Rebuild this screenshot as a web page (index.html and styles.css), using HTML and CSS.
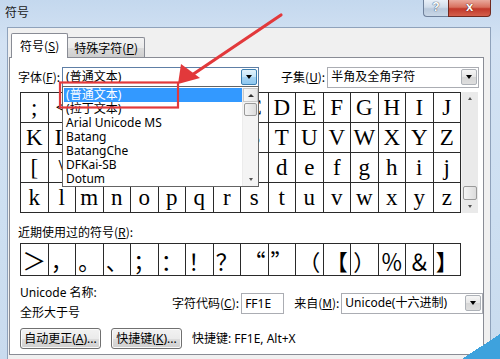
FILE: index.html
```html
<!DOCTYPE html>
<html>
<head>
<meta charset="utf-8">
<title>符号</title>
<link rel="stylesheet" href="styles.css">
</head>
<body>
<div class="window">
  <div class="titlebar">
    <span class="title">符号</span>
    <div class="caption-btns">
      <span class="btn-help">?</span>
      <span class="btn-close">x</span>
    </div>
  </div>
  <div class="client">
    <div class="tabs">
      <div class="tab active">符号(<u>S</u>)</div>
      <div class="tab">特殊字符(<u>P</u>)</div>
    </div>
    <div class="panel">
      <div class="font-row">
        <span class="lbl font-lbl">字体(<u>F</u>):</span>
        <div class="combo font-combo">
          <span class="combo-text">(普通文本)</span>
          <span class="drop drop-active"><i class="tri"></i></span>
          <div class="droplist">
            <div class="items">
              <div class="item selected">(普通文本)</div>
              <div class="item">(拉丁文本)</div>
              <div class="item">Arial Unicode MS</div>
              <div class="item">Batang</div>
              <div class="item">BatangChe</div>
              <div class="item">DFKai-SB</div>
              <div class="item">Dotum</div>
            </div>
            <div class="list-scroll">
              <span class="sb-btn"><i class="tri-up"></i></span>
              <span class="sb-thumb small"></span>
              <span class="sb-fill"></span>
              <span class="sb-arrow-dn"><i class="tri-dn-s"></i></span>
            </div>
          </div>
        </div>
        <span class="lbl subset-lbl">子集(<u>U</u>):</span>
        <div class="combo subset-combo">
          <span class="combo-text">半角及全角字符</span>
          <span class="drop"><i class="tri"></i></span>
        </div>
      </div>

      <div class="grid-wrap">
        <div class="chargrid">
          <span>;</span><span>&lt;</span><span>=</span><span>&gt;</span><span>?</span><span>@</span><span>A</span><span>B</span><span>C</span><span>D</span><span>E</span><span>F</span><span>G</span><span>H</span><span>I</span><span>J</span>
          <span>K</span><span>L</span><span>M</span><span>N</span><span>O</span><span>P</span><span>Q</span><span>R</span><span>S</span><span>T</span><span>U</span><span>V</span><span>W</span><span>X</span><span>Y</span><span>Z</span>
          <span>[</span><span>\</span><span>]</span><span>^</span><span>_</span><span>`</span><span>a</span><span>b</span><span>c</span><span>d</span><span>e</span><span>f</span><span>g</span><span>h</span><span>i</span><span>j</span>
          <span>k</span><span>l</span><span>m</span><span>n</span><span>o</span><span>p</span><span>q</span><span>r</span><span>s</span><span>t</span><span>u</span><span>v</span><span>w</span><span>x</span><span>y</span><span>z</span>
        </div>
        <div class="vscroll">
          <span class="sb-arrow-up"><i class="tri-up-s"></i></span>
          <span class="sb-track"></span>
          <span class="sb-thumb big"></span>
          <span class="sb-arrow-dn"><i class="tri-dn-s"></i></span>
        </div>
      </div>

      <div class="recent-lbl">近期使用过的符号(<u>R</u>):</div>
      <div class="recent">
        <span class="big">＞</span><span>，</span><span>。</span><span>、</span><span>；</span><span>：</span><span>！</span><span>？</span><span class="qr">“</span><span class="ql">”</span><span>（</span><span>【</span><span>）</span><span>％</span><span>＆</span><span>】</span>
      </div>

      <div class="info-row">
        <div class="info-left">
          <div>Unicode 名称:</div>
          <div>全形大于号</div>
        </div>
        <span class="lbl code-lbl">字符代码(<u>C</u>):</span>
        <div class="textbox">FF1E</div>
        <span class="lbl from-lbl">来自(<u>M</u>):</span>
        <div class="combo from-combo">
          <span class="combo-text">Unicode(十六进制)</span>
          <span class="drop"><i class="tri"></i></span>
        </div>
      </div>

      <div class="btn-row">
        <span class="button b1">自动更正(<u>A</u>)...</span>
        <span class="button b2">快捷键(<u>K</u>)...</span>
        <span class="shortcut">快捷键: FF1E, Alt+X</span>
      </div>
    </div>
  </div>

  <svg class="overlay" width="500" height="359" viewBox="0 0 500 359">
    <rect x="60" y="82.5" width="118" height="25" fill="none" stroke="#e2393b" stroke-width="2.2"/>
    <line x1="281" y1="15" x2="189" y2="77" stroke="#e2393b" stroke-width="3.2" stroke-linecap="round"/>
    <polygon points="178,84 181,64 200,78" fill="#e2393b"/>
  </svg>
  <div class="corner"></div>
</div>
</body>
</html>
```

FILE: styles.css
```css
* { box-sizing: border-box; margin: 0; padding: 0; }

body {
  width: 500px;
  height: 359px;
  overflow: hidden;
  font-family: "Noto Sans", "Noto Sans CJK SC", sans-serif;
  font-size: 12px;
  color: #000;
  background: #fff;
}

u { text-decoration: underline; text-underline-offset: 1px; }

.window {
  position: relative;
  width: 500px;
  height: 359px;
  background: linear-gradient(180deg, #c4d8ee 0%, #d3e2f3 12%, #cddff1 60%, #c9dbee 100%);
  padding: 0 9px 0 7px;
  display: flex;
  flex-direction: column;
}

.titlebar {
  height: 27px;
  display: flex;
  align-items: flex-start;
  flex-shrink: 0;
}

.title {
  margin-top: 3px;
  margin-left: -2px;
  font-size: 12px;
  line-height: 18px;
  font-family: "Noto Sans CJK SC", sans-serif;
  color: #1a1a1a;
}

.caption-btns {
  margin-left: auto;
  display: flex;
  height: 17px;
}

.btn-help {
  width: 25px;
  height: 17px;
  border: 1px solid #6f819b;
  border-top: none;
  border-right: none;
  border-radius: 0 0 0 4px;
  background: linear-gradient(180deg, #e9f0f8 0%, #d0dcea 45%, #b9c9dc 55%, #c9d7e7 100%);
  color: #fff;
  font-weight: bold;
  font-size: 12px;
  line-height: 15px;
  text-align: center;
  text-shadow: 0 0 1px #3a4a66, 0 0 1px #3a4a66;
  font-family: "Liberation Sans", sans-serif;
}

.btn-close {
  width: 43px;
  height: 17px;
  border: 1px solid #70291f;
  border-top: none;
  border-radius: 0 0 4px 0;
  background: linear-gradient(180deg, #e9a99d 0%, #d8705e 45%, #c1382a 55%, #d4604c 100%);
  color: #fff;
  font-weight: bold;
  font-size: 13px;
  line-height: 14px;
  text-align: center;
  text-shadow: 0 0 1px #5a1a12, 0 0 1px #5a1a12;
  font-family: "Liberation Sans", sans-serif;
}

.client {
  flex: 1;
  background: #f0f0f0;
  border: 1px solid #8fa2bb;
  border-bottom: none;
  padding: 5px 6px 0 1px;
  display: flex;
  flex-direction: column;
}

.tabs {
  display: flex;
  align-items: flex-end;
  margin-left: 2px;
  height: 24px;
  position: relative;
  z-index: 2;
}

.tab {
  height: 20px;
  padding: 0 6px;
  border: 1px solid #898c95;
  border-bottom: none;
  border-radius: 2px 2px 0 0;
  background: linear-gradient(180deg, #f3f3f3 0%, #ebebeb 50%, #dcdcdc 51%, #cfcfcf 100%);
  font-family: "Noto Sans CJK SC", sans-serif;
  line-height: 19px;
  color: #000;
  white-space: nowrap;
  margin-left: -1px;
}

.tab:first-child { margin-left: 0; }

.tab.active {
  height: 25px;
  margin-bottom: -1px;
  background: #fff;
  padding: 0 8px;
  line-height: 23px;
  position: relative;
  z-index: 3;
}

.panel {
  background: #fff;
  border: 1px solid #898c95;
  height: 298px;
  padding: 9px 0 0 8px;
  position: relative;
  z-index: 1;
}

.lbl {
  font-family: "Noto Sans CJK SC", sans-serif;
  line-height: 16px;
  white-space: nowrap;
  flex-shrink: 0;
}

.font-row {
  display: flex;
  align-items: center;
  height: 20px;
  position: relative;
  z-index: 5;
}

.font-lbl { margin-right: 2px; }
.subset-lbl { margin-left: 22px; margin-right: 2px; }

.combo {
  position: relative;
  height: 20px;
  border: 1px solid #abadb3;
  background: #fff;
  display: flex;
  align-items: center;
  flex-shrink: 0;
}

.combo-text {
  flex: 1;
  padding-left: 3px;
  line-height: 16px;
  white-space: nowrap;
  overflow: hidden;
}

.font-combo { width: 197px; border-color: #5e7fa6; }
.subset-combo { width: 152px; height: 21px; }

.drop {
  width: 16px;
  height: 16px;
  margin-right: 1px;
  border: 1px solid #aeb2b8;
  border-radius: 2px;
  background: linear-gradient(180deg, #f6f6f6 0%, #e6e6e6 50%, #d6d6d6 51%, #dedede 100%);
  display: flex;
  align-items: center;
  justify-content: center;
}

.drop-active {
  border-color: #3c7fb1;
  background: linear-gradient(180deg, #e3f2fc 0%, #c4e4f8 50%, #a6d3f3 51%, #8ec8f0 100%);
}

.tri {
  width: 0;
  height: 0;
  border-left: 3.5px solid transparent;
  border-right: 3.5px solid transparent;
  border-top: 4px solid #000;
}

.droplist {
  position: absolute;
  left: -1px;
  top: 18px;
  width: 197px;
  height: 101px;
  border: 1px solid #646464;
  background: #fff;
  display: flex;
  padding: 1px 0 0 1px;
}

.items { flex: 1; overflow: hidden; }

.item {
  height: 14px;
  line-height: 14px;
  padding-left: 2px;
  white-space: nowrap;
  font-size: 12px;
}

.item.selected { background: #3399ff; color: #fff; }

.list-scroll {
  width: 16px;
  display: flex;
  flex-direction: column;
  background: #f4f4f4;
  border-left: 1px solid #ececec;
}

.sb-btn {
  height: 14px;
  border: 1px solid #c9c9c9;
  background: linear-gradient(90deg, #f7f7f7, #e7e7e7);
  display: flex;
  align-items: center;
  justify-content: center;
}

.sb-thumb {
  border: 1px solid #9a9a9a;
  border-radius: 2px;
  background: linear-gradient(90deg, #f4f4f4, #dcdcdc);
}

.sb-thumb.small { height: 13px; margin: 1px 1px 0; }
.sb-fill { flex: 1; }

.tri-up {
  width: 0; height: 0;
  border-left: 3px solid transparent;
  border-right: 3px solid transparent;
  border-bottom: 3px solid #333;
}

.tri-up-s {
  width: 0; height: 0;
  border-left: 2.5px solid transparent;
  border-right: 2.5px solid transparent;
  border-bottom: 3px solid #555;
}

.tri-dn-s {
  width: 0; height: 0;
  border-left: 2.5px solid transparent;
  border-right: 2.5px solid transparent;
  border-top: 3px solid #555;
}

.sb-arrow-up, .sb-arrow-dn {
  height: 13px;
  display: flex;
  align-items: center;
  justify-content: center;
}

.grid-wrap {
  display: flex;
  margin: 5px 0 0 2px;
  height: 121px;
}

.chargrid {
  display: grid;
  grid-template-columns: repeat(16, 27.5px);
  grid-template-rows: repeat(4, 30px);
  border-top: 1px solid #2a2a2a;
  border-left: 1px solid #2a2a2a;
  font-family: "Liberation Serif", serif;
  font-size: 23px;
  width: 441px;
}

.chargrid span {
  border-right: 1px solid #2a2a2a;
  border-bottom: 1px solid #2a2a2a;
  display: flex;
  align-items: center;
  justify-content: center;
  line-height: 1;
}

.vscroll {
  width: 17px;
  background: #eaeaea;
  display: flex;
  flex-direction: column;
  border-left: 1px solid #f4f4f4;
}

.sb-track { flex: 1; }
.sb-thumb.big { height: 14px; margin: 0 1px; }

.recent-lbl {
  margin-top: 11px;
  line-height: 16px;
  font-family: "Noto Sans CJK SC", sans-serif;
}

.recent {
  margin: 3px 0 0 2px;
  display: grid;
  grid-template-columns: repeat(16, 27.5px);
  grid-template-rows: 31px;
  border: 1px solid #2a2a2a;
  border-right: none;
  width: 441px;
  font-family: "Noto Sans CJK SC", sans-serif;
  font-size: 22px;
}

.recent span {
  border-right: 1px solid #2a2a2a;
  display: flex;
  align-items: center;
  justify-content: center;
  line-height: 1;
}

.recent .big { font-size: 24px; }
.recent .qr { justify-content: flex-end; padding-right: 2px; }
.recent .ql { justify-content: flex-start; padding-left: 2px; }

.info-row {
  display: flex;
  align-items: center;
  margin: 9px 0 0 2px;
}

.info-left {
  width: 152px;
  flex-shrink: 0;
  display: flex;
  flex-direction: column;
  gap: 4px;
  line-height: 16px;
  white-space: nowrap;
}

.code-lbl { margin-right: 2px; }

.textbox {
  width: 43px;
  height: 21px;
  flex-shrink: 0;
  border: 1px solid #abadb3;
  background: #fff;
  padding-left: 3px;
  line-height: 19px;
}

.from-lbl { margin-left: 10px; margin-right: 2px; }

.from-combo { width: 142px; height: 21px; }

.btn-row {
  display: flex;
  align-items: center;
  margin: 7px 0 0 2px;
}

.button {
  height: 21px;
  border: 1px solid #707070;
  border-radius: 3px;
  background: linear-gradient(180deg, #f2f2f2 0%, #ebebeb 50%, #dddddd 51%, #cfcfcf 100%);
  display: flex;
  align-items: center;
  justify-content: center;
  line-height: 16px;
  white-space: nowrap;
  flex-shrink: 0;
  box-shadow: inset 0 0 0 1px #fbfbfb;
}

.b1 { width: 81px; }
.b2 { width: 71px; margin-left: 10px; }
.shortcut { margin-left: 10px; line-height: 16px; white-space: nowrap; }

.overlay {
  position: absolute;
  left: 0;
  top: 0;
  pointer-events: none;
  z-index: 10;
}

.corner {
  position: absolute;
  right: 0;
  bottom: 0;
  width: 38px;
  height: 25px;
  background: linear-gradient(to top left, #3ea2dd 50%, transparent 50%);
  z-index: 11;
}
```
